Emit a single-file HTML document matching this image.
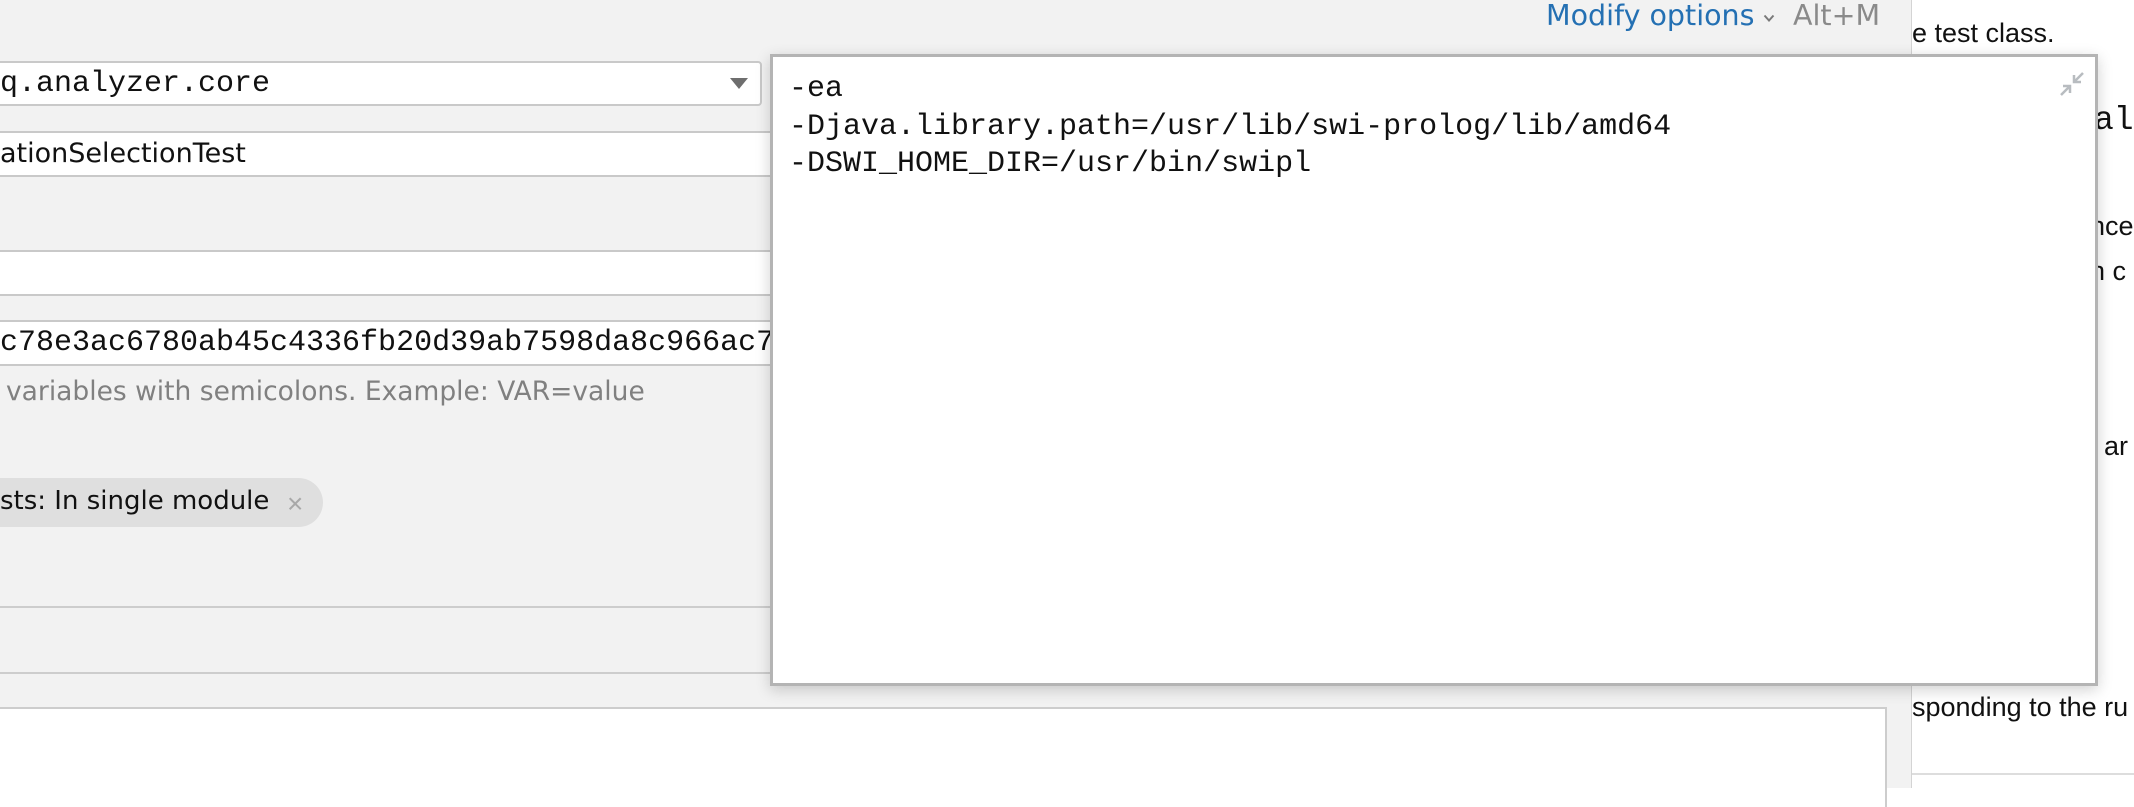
<!DOCTYPE html>
<html><head><meta charset="utf-8"><style>
*{box-sizing:border-box;margin:0;padding:0}
body{width:2134px;height:788px;overflow:hidden;background:#fff;position:relative;font-family:"Liberation Sans",sans-serif}
.abs{position:absolute}
.left{left:0;top:0;width:1912px;height:788px;background:#f2f2f2;border-right:1px solid #d4d4d4}
.field{position:absolute;left:-4px;background:#fff;border:2px solid #c9c9c9}
.mono{font-family:"Liberation Mono",monospace;font-size:30px;color:#111}
.sans{font-family:"DejaVu Sans","Liberation Sans",sans-serif}
.rt{font-size:27px;color:#111;white-space:nowrap}
</style></head><body>
<div class="abs left">
  <div class="abs sans" style="left:1546px;top:-1px;font-size:28.5px;color:#2470b3;white-space:nowrap">Modify options</div>
  <svg class="abs" style="left:1763px;top:14px" width="12" height="9" viewBox="0 0 12 9"><path d="M1.5 1.5L6 6.5L10.5 1.5" stroke="#7a7a7a" stroke-width="2" fill="none"/></svg>
  <div class="abs sans" style="left:1793px;top:-1px;font-size:28.5px;color:#8a8a8a">Alt+M</div>

  <div class="field" style="top:61px;width:766px;height:45px;border-radius:4px"></div>
  <div class="abs mono" style="left:0;top:64px;line-height:40px">q.analyzer.core</div>
  <svg class="abs" style="left:730px;top:78px" width="18" height="12"><path d="M0 0H18L9 11Z" fill="#6e6e6e"/></svg>

  <div class="field" style="top:131px;width:1000px;height:46px"></div>
  <div class="abs sans" style="left:0;top:134px;font-size:27px;line-height:40px;color:#111">ationSelectionTest</div>

  <div class="field" style="top:250px;width:1000px;height:46px"></div>

  <div class="field" style="top:320px;width:1000px;height:46px"></div>
  <div class="abs mono" style="left:0;top:323px;line-height:40px;white-space:nowrap">c78e3ac6780ab45c4336fb20d39ab7598da8c966ac7c6d</div>

  <div class="abs sans" style="left:6px;top:376px;font-size:26.5px;color:#808080;white-space:nowrap">variables with semicolons. Example: VAR=value</div>

  <div class="abs" style="left:-30px;top:478px;width:353px;height:49px;background:#dfdfdf;border-radius:25px"></div>
  <div class="abs sans" style="left:0;top:486px;font-size:26px;color:#111;white-space:nowrap">sts: In single module</div>
  <div class="abs" style="left:287px;top:488px;font-size:28px;color:#a8a8a8">&#215;</div>

  <div class="abs" style="left:0;top:606px;width:1912px;height:2px;background:#cdcdcd"></div>
  <div class="abs" style="left:0;top:672px;width:1912px;height:2px;background:#cdcdcd"></div>
  <div class="abs" style="left:-4px;top:707px;width:1891px;height:100px;background:#fff;border:2px solid #cdcdcd;border-bottom:none"></div>
</div>

<div class="abs rt" style="left:1912px;top:18px">e test class.</div>
<div class="abs mono" style="left:2094px;top:102px;font-size:33px">al</div>
<div class="abs rt" style="left:2090px;top:211px">nce</div>
<div class="abs rt" style="left:2090px;top:256px">n c</div>
<div class="abs rt" style="left:2104px;top:431px">ar</div>
<div class="abs rt" style="left:1912px;top:692px">sponding to the ru</div>
<div class="abs" style="left:1912px;top:773px;width:222px;height:2px;background:#ddd"></div>

<div class="abs" style="left:770px;top:54px;width:1328px;height:632px;background:#fff;border:3px solid #b4b4b4;box-shadow:0 4px 14px rgba(0,0,0,0.18)">
  <div class="abs mono" style="left:16px;top:14px;line-height:37.5px;white-space:pre">-ea
-Djava.library.path=/usr/lib/swi-prolog/lib/amd64
-DSWI_HOME_DIR=/usr/bin/swipl</div>
  <svg class="abs" style="left:1286px;top:14px" width="26" height="26" viewBox="0 0 26 26"><g stroke="#b8bcc0" stroke-width="2.5" fill="none"><path d="M24 2L15 11M15 4V11H22"/><path d="M2 24L11 15M4 15H11V22"/></g></svg>
</div>
</body></html>
